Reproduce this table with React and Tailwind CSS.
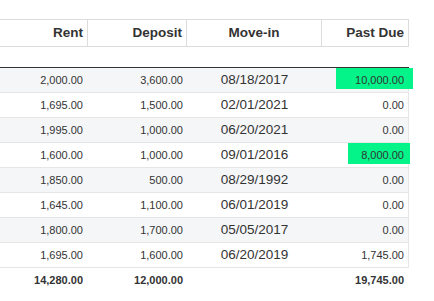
import React from 'react';

const rows = [
    { rent: '2,000.00', deposit: '3,600.00', moveIn: '08/18/2017', pastDue: '10,000.00', hl: 'wide' },
    { rent: '1,695.00', deposit: '1,500.00', moveIn: '02/01/2021', pastDue: '0.00' },
    { rent: '1,995.00', deposit: '1,000.00', moveIn: '06/20/2021', pastDue: '0.00' },
    { rent: '1,600.00', deposit: '1,000.00', moveIn: '09/01/2016', pastDue: '8,000.00', hl: 'narrow' },
    { rent: '1,850.00', deposit: '500.00', moveIn: '08/29/1992', pastDue: '0.00' },
    { rent: '1,645.00', deposit: '1,100.00', moveIn: '06/01/2019', pastDue: '0.00' },
    { rent: '1,800.00', deposit: '1,700.00', moveIn: '05/05/2017', pastDue: '0.00' },
    { rent: '1,695.00', deposit: '1,600.00', moveIn: '06/20/2019', pastDue: '1,745.00' },
];

const App = () => {
    return (
        <div
            className="w-[434px] h-[301px] bg-white pt-[19px] text-[#333] overflow-hidden"
            style={{ fontFamily: '"Liberation Sans", Arial, sans-serif' }}
        >
            {/* Header */}
            <div className="flex w-[409px] h-[28px] border-y border-[#dcdcdc] font-bold text-[13.5px]">
                <div className="w-[88px] border-r border-[#dcdcdc] flex items-center justify-end pr-[4px]">Rent</div>
                <div className="w-[99px] border-r border-[#dcdcdc] flex items-center justify-end pr-[4px]">Deposit</div>
                <div className="w-[135px] border-r border-[#dcdcdc] flex items-center justify-center">Move-in</div>
                <div className="w-[87px] border-r border-[#dcdcdc] flex items-center justify-end pr-[4px]">Past Due</div>
            </div>

            {/* Filter row spacer */}
            <div className="h-[20px]" />

            {/* Body */}
            <div className="w-[409px] border-t border-[#333]">
                {rows.map((r, i) => (
                    <div
                        key={i}
                        className={`flex h-[25px] border-b border-r border-[#e6e6e6] ${i % 2 === 0 ? 'bg-[#f5f6f8]' : 'bg-white'}`}
                    >
                        <div className="w-[88px] flex items-center justify-end pr-[5px] text-[11px]">{r.rent}</div>
                        <div className="w-[99px] flex items-center justify-end pr-[4px] text-[11px]">{r.deposit}</div>
                        <div className="w-[135px] flex items-center justify-center text-[13.5px]">{r.moveIn}</div>
                        <div className="relative w-[86px] flex items-center justify-end pr-[4px] text-[11px]">
                            {r.hl === 'wide' && (
                                <span className="absolute top-0 left-[14px] w-[77px] h-[21px] bg-[#05f48a]" />
                            )}
                            {r.hl === 'narrow' && (
                                <span className="absolute top-0 left-[26px] w-[62px] h-[21px] bg-[#05f48a]" />
                            )}
                            <span className="relative">{r.pastDue}</span>
                        </div>
                    </div>
                ))}

                {/* Totals */}
                <div className="flex h-[25px] font-bold text-[11px]">
                    <div className="w-[88px] flex items-center justify-end pr-[5px]">14,280.00</div>
                    <div className="w-[99px] flex items-center justify-end pr-[4px]">12,000.00</div>
                    <div className="w-[135px]" />
                    <div className="w-[86px] flex items-center justify-end pr-[4px]">19,745.00</div>
                </div>
            </div>
        </div>
    );
};

export default App;
